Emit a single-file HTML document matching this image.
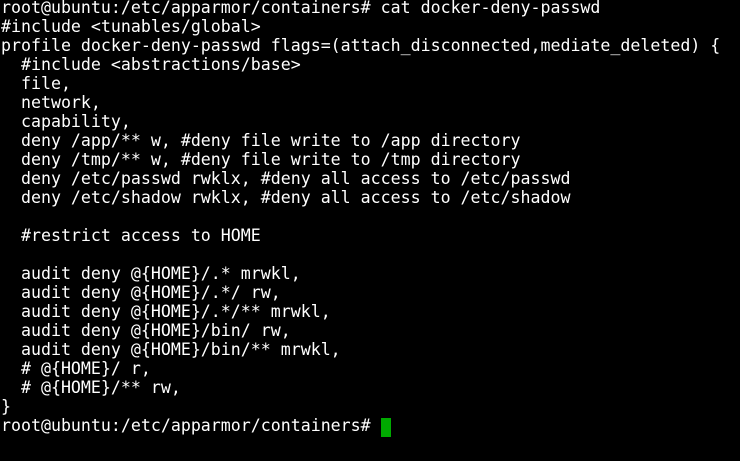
<html><head><style>
body{margin:0;background:#000;width:740px;height:461px;overflow:hidden}
pre{margin:0;position:absolute;left:1px;top:-2px;font-family:"DejaVu Sans Mono",monospace;font-size:16.6px;line-height:19px;color:#fff}
.c{position:absolute;left:381px;top:418px;width:10px;height:19px;background:#00aa00}
</style></head><body><pre>root@ubuntu:/etc/apparmor/containers# cat docker-deny-passwd
#include &lt;tunables/global&gt;
profile docker-deny-passwd flags=(attach_disconnected,mediate_deleted) {
  #include &lt;abstractions/base&gt;
  file,
  network,
  capability,
  deny /app/** w, #deny file write to /app directory
  deny /tmp/** w, #deny file write to /tmp directory
  deny /etc/passwd rwklx, #deny all access to /etc/passwd
  deny /etc/shadow rwklx, #deny all access to /etc/shadow

  #restrict access to HOME

  audit deny @{HOME}/.* mrwkl,
  audit deny @{HOME}/.*/ rw,
  audit deny @{HOME}/.*/** mrwkl,
  audit deny @{HOME}/bin/ rw,
  audit deny @{HOME}/bin/** mrwkl,
  # @{HOME}/ r,
  # @{HOME}/** rw,
}
root@ubuntu:/etc/apparmor/containers# </pre><div class="c"></div></body></html>
